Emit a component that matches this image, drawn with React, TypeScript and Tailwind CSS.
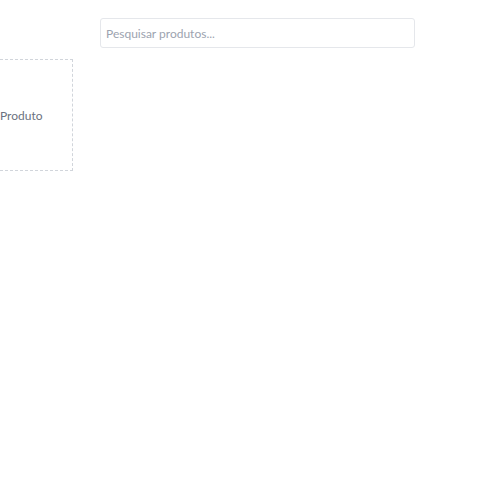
import React from 'react'

const App: React.FC = () => {
  return (
    <div className="min-h-[500px] w-[500px] overflow-hidden bg-white font-['Lato',sans-serif]">
      <div className="pt-[18px] pl-[100px]">
        <input
          type="text"
          placeholder="Pesquisar produtos..."
          className="h-[30px] w-[315px] rounded-[3px] border border-[#e5e7eb] px-[5px] text-[12px] text-gray-700 placeholder:text-[#9ca3af] outline-none"
        />
      </div>

      <div className="mt-[11px] flex">
        <div className="ml-[-20px] flex h-[112px] w-[93px] items-center border border-dashed border-[#d1d5db] pt-px pl-[19px]">
          <span className="text-[12px] text-[#6b7280]">Produto</span>
        </div>
      </div>
    </div>
  )
}

export default App
